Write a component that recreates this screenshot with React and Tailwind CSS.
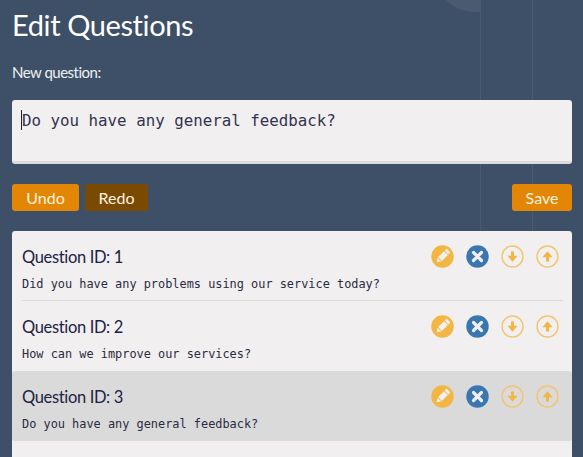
import React from "react";

const Pencil = () => (
  <svg width="23" height="23" viewBox="0 0 23 23" className="block">
    <circle cx="11.5" cy="11.5" r="11.2" fill="#f4b642" />
    <g transform="rotate(45 11.5 11.5)" fill="#f1eff0">
      <rect x="8.8" y="3" width="5.4" height="2.8" rx="0.7" />
      <rect x="8.8" y="6.6" width="5.4" height="8.4" />
      <path d="M8.8 15.8h5.4l-2.7 4z" />
    </g>
  </svg>
);

const Cross = () => (
  <svg width="23" height="23" viewBox="0 0 23 23" className="block">
    <circle cx="11.5" cy="11.5" r="11.2" fill="#3a76b0" />
    <path d="M7.5 7.5l8 8M15.5 7.5l-8 8" stroke="#f1eff0" strokeWidth="3.2" strokeLinecap="round" />
  </svg>
);

const Arrow = ({ up }) => (
  <svg width="23" height="23" viewBox="0 0 23 23" className="block">
    <circle cx="11.5" cy="11.5" r="10.5" fill="none" stroke="#f4c470" strokeWidth="1.4" />
    <g transform={up ? "rotate(180 11.5 11.5)" : undefined}>
      <path d="M11.5 6.4v7" stroke="#f4b642" strokeWidth="3" />
      <path d="M6.4 10.8h10.2l-5.1 6z" fill="#f4b642" />
    </g>
  </svg>
);

const Row = ({ id, text, active, divider }) => (
  <div className={`relative h-[70px] ${active ? "rounded-[3px] bg-[#dadada]" : ""}`}>
    <div className="flex justify-between pl-[10px] pr-[14px] pt-[14px]">
      <h3 className="text-[16.5px] leading-[24px] tracking-[-0.35px] text-[#1c2244]">Question ID: {id}</h3>
      <div className="mr-[-1px] flex gap-[12px]">
        <Pencil />
        <Cross />
        <Arrow />
        <Arrow up />
      </div>
    </div>
    <p className="mt-[7px] pl-[10px] font-['DejaVu_Sans_Mono',monospace] text-[11.9px] leading-[16px] text-[#2b2b40]">
      {text}
    </p>
    {divider && <div className="absolute bottom-0 left-[10px] right-[9px] h-px bg-[#d8d8d8]" />}
  </div>
);

export default function App() {
  return (
    <div className="relative h-[457px] w-[583px] overflow-hidden bg-[#3e5067] font-['Lato',sans-serif]">
      <div className="absolute left-0 top-0 h-[20px] w-[480px] overflow-hidden">
        <div className="absolute left-[433px] top-[-72px] h-[84px] w-[84px] rounded-full bg-[#4a5b70]" />
      </div>
      <div className="absolute left-[480px] top-0 h-full w-px bg-[#4a5b71]" />
      <div className="absolute left-[532px] top-0 h-full w-px bg-[#4a5b71]" />

      <div className="relative pl-[12px] pr-[11px]">
        <h1 className="pt-[8px] text-[29px] font-normal leading-[34px] tracking-[-0.4px] text-white">Edit Questions</h1>
        <p className="mt-[18px] text-[15px] leading-[24px] tracking-[-0.5px] text-[#eef0f2]">New question:</p>

        <div className="mt-[16px] h-[64px] rounded-[3px] border-b-[3px] border-[#dcdbdd] bg-[#f1eff0] pl-[10px] pt-[9px]">
          <div className="relative font-['DejaVu_Sans_Mono',monospace] text-[15.8px] leading-[24px] text-[#33334f]">
            <span className="absolute left-[-1px] top-[1px] h-[20px] w-px bg-[#1c2244]" />
            Do you have any general feedback?
          </div>
        </div>

        <div className="mt-[20px] flex items-center justify-between">
          <div className="flex gap-[6px]">
            <button className="h-[27px] w-[67px] rounded-[3px] bg-[#e38603] text-[16px] leading-[27px] text-[#fff3e0]">Undo</button>
            <button className="h-[27px] w-[63px] rounded-[3px] bg-[#7a4a03] text-[16px] leading-[27px] text-[#fff3e0]">Redo</button>
          </div>
          <button className="h-[27px] w-[60px] rounded-[3px] bg-[#e38603] text-[16px] leading-[27px] text-[#fff3e0]">Save</button>
        </div>

        <div className="mt-[20px] h-[260px] rounded-[3px] bg-[#f1eff0]">
          <Row id={1} text="Did you have any problems using our service today?" divider />
          <Row id={2} text="How can we improve our services?" />
          <Row id={3} text="Do you have any general feedback?" active />
        </div>
      </div>
    </div>
  );
}
